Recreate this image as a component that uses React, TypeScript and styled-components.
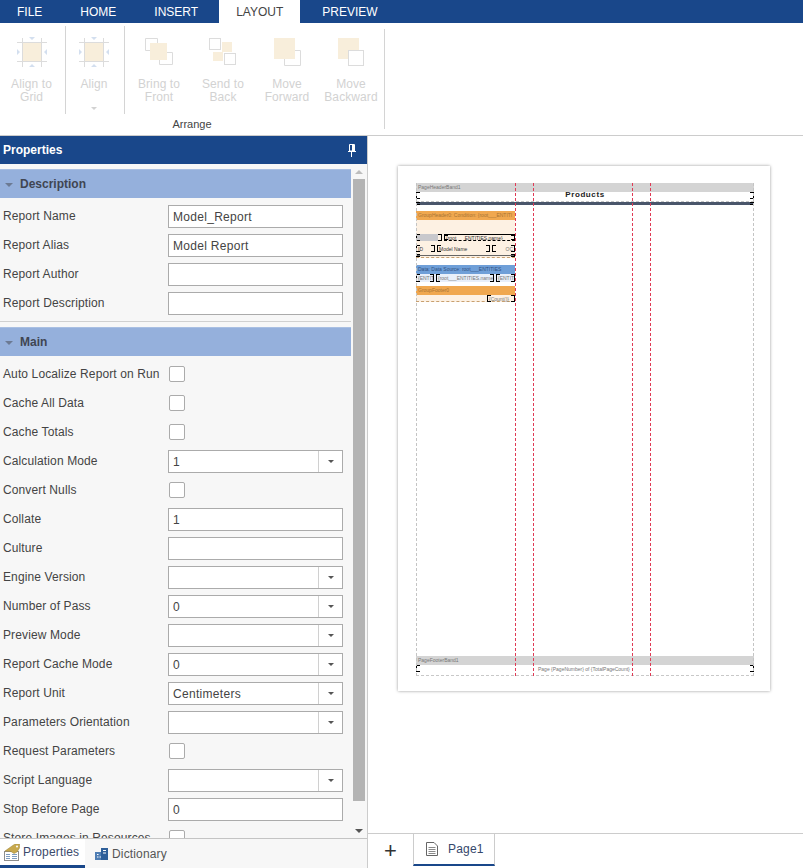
import React from "react";
import styled, { createGlobalStyle } from "styled-components";

const NAVY = "#19478a";

const TABS = ["FILE", "HOME", "INSERT", "LAYOUT", "PREVIEW"];

type Field = { label: string; kind: "text" | "select" | "check"; value?: string };

const DESCRIPTION: Field[] = [
  { label: "Report Name", kind: "text", value: "Model_Report" },
  { label: "Report Alias", kind: "text", value: "Model Report" },
  { label: "Report Author", kind: "text" },
  { label: "Report Description", kind: "text" },
];

const MAIN: Field[] = [
  { label: "Auto Localize Report on Run", kind: "check" },
  { label: "Cache All Data", kind: "check" },
  { label: "Cache Totals", kind: "check" },
  { label: "Calculation Mode", kind: "select", value: "1" },
  { label: "Convert Nulls", kind: "check" },
  { label: "Collate", kind: "text", value: "1" },
  { label: "Culture", kind: "text" },
  { label: "Engine Version", kind: "select" },
  { label: "Number of Pass", kind: "select", value: "0" },
  { label: "Preview Mode", kind: "select" },
  { label: "Report Cache Mode", kind: "select", value: "0" },
  { label: "Report Unit", kind: "select", value: "Centimeters" },
  { label: "Parameters Orientation", kind: "select" },
  { label: "Request Parameters", kind: "check" },
  { label: "Script Language", kind: "select" },
  { label: "Stop Before Page", kind: "text", value: "0" },
  { label: "Store Images in Resources", kind: "check" },
];

const PEACH = "#f8eedb";
const EDGE = "#dcdcdc";
const HINT = "#d3dfef";

function AlignIcon() {
  return (
    <svg width="32" height="32" viewBox="0 0 32 32">
      <rect x="6" y="7" width="20" height="19" fill={PEACH} />
      <path d="M1 6.5H31M1 25.5H31M6.5 2V31M25.5 2V31" stroke={EDGE} fill="none" />
      <path d="M13 1H19L16 4ZM13 31H19L16 28ZM1 13V19L4 16ZM31 13V19L28 16Z" fill={HINT} />
    </svg>
  );
}

function FrontIcon() {
  return (
    <svg width="32" height="32" viewBox="0 0 32 32" fill="none">
      <path d="M7 14.5H2.5V2.5H14.5V7" stroke={EDGE} />
      <rect x="7" y="7" width="17" height="17" fill={PEACH} />
      <path d="M24 16.5H29.5V28.5H16.5V24" stroke={EDGE} />
    </svg>
  );
}

function BackIcon() {
  return (
    <svg width="32" height="32" viewBox="0 0 32 32" fill="none">
      <rect x="15" y="6" width="10" height="10" fill={PEACH} />
      <rect x="6" y="16" width="10" height="9" fill={PEACH} />
      <rect x="2.5" y="2.5" width="11" height="11" fill="#fff" stroke={EDGE} />
      <rect x="17.5" y="17.5" width="11" height="11" fill="#fff" stroke={EDGE} />
    </svg>
  );
}

function ForwardIcon() {
  return (
    <svg width="32" height="32" viewBox="0 0 32 32" fill="none">
      <rect x="3" y="2" width="21" height="21" fill={PEACH} />
      <path d="M24 14.5H29.5V29.5H13.5V23" stroke={EDGE} />
    </svg>
  );
}

function BackwardIcon() {
  return (
    <svg width="32" height="32" viewBox="0 0 32 32" fill="none">
      <rect x="3" y="2" width="21" height="21" fill={PEACH} />
      <rect x="13.5" y="14.5" width="15" height="15" fill="#fff" stroke={EDGE} />
    </svg>
  );
}

function PinIcon() {
  return (
    <svg width="8" height="13" viewBox="0 0 8 13">
      <path d="M1.5 0.5H6.5V7H1.5Z" fill="none" stroke="#fff" />
      <rect x="4" y="1" width="2" height="6" fill="#fff" />
      <rect x="0" y="7" width="8" height="1" fill="#fff" />
      <rect x="3" y="8" width="1" height="5" fill="#fff" />
    </svg>
  );
}

function PropertiesIcon() {
  return (
    <svg width="16" height="17" viewBox="0 0 16 17">
      <rect x="0.5" y="7.5" width="14" height="9" fill="#fff" stroke="#8d8d8d" />
      <path d="M2 10.5H6M8 10.5H13M2 12.5H6M8 12.5H13M2 14.5H6M8 14.5H13" stroke="#7d9cc0" />
      <path d="M1 7L8 2L11 0H15.5V4L13 8L10 9.5L7 7.5Z" fill="#c8a94e" stroke="#9b8236" strokeWidth="0.5" />
      <circle cx="13" cy="2.5" r="1" fill="#fff" />
    </svg>
  );
}

function DictionaryIcon() {
  return (
    <svg width="13" height="13" viewBox="0 0 13 13">
      <rect x="0" y="5" width="7" height="8" fill="#4f7db3" />
      <rect x="6" y="1" width="7" height="12" fill="#2f5f99" />
      <path d="M2 7.5H3.5M2 10H3.5M4.5 10H6M8 3.5H11M8 6H11" stroke="#fff" />
    </svg>
  );
}

function PageIcon() {
  return (
    <svg width="12" height="14" viewBox="0 0 12 14" fill="none" stroke="#666">
      <path d="M0.5 0.5H8L11.5 4V13.5H0.5Z" />
      <path d="M2.5 5.5H9.5M2.5 7.5H9.5M2.5 9.5H9.5M2.5 11.5H9.5" stroke="#8a8a8a" />
    </svg>
  );
}

function FieldRow({ field }: { field: Field }) {
  return (
    <Row>
      <RowLabel>{field.label}</RowLabel>
      {field.kind === "check" && <CheckBox />}
      {field.kind === "text" && <TextBox>{field.value}</TextBox>}
      {field.kind === "select" && (
        <SelectBox>
          <SelectValue>{field.value}</SelectValue>
          <SelectArrow />
        </SelectBox>
      )}
    </Row>
  );
}

export default function App() {
  return (
    <Screen>
      <GlobalStyle />
      <TabBar>
        {TABS.map((tab) => (
          <Tab key={tab} $active={tab === "LAYOUT"}>
            {tab}
          </Tab>
        ))}
      </TabBar>

      <Ribbon>
        <RibbonGroup>
          <GroupTools>
            <ToolSlot $width={66}>
              <ToolButton>
                <AlignIcon />
                <ToolLabel>Align to Grid</ToolLabel>
              </ToolButton>
            </ToolSlot>
            <ToolSlot $width={59}>
              <ToolButton>
                <AlignIcon />
                <ToolLabel>Align</ToolLabel>
                <ToolCaret />
              </ToolButton>
            </ToolSlot>
            <ArrangeTools>
              <ToolButton>
                <FrontIcon />
                <ToolLabel>Bring to Front</ToolLabel>
              </ToolButton>
              <ToolButton>
                <BackIcon />
                <ToolLabel>Send to Back</ToolLabel>
              </ToolButton>
              <ToolButton>
                <ForwardIcon />
                <ToolLabel>Move Forward</ToolLabel>
              </ToolButton>
              <ToolButton>
                <BackwardIcon />
                <ToolLabel>Move Backward</ToolLabel>
              </ToolButton>
            </ArrangeTools>
          </GroupTools>
          <GroupName>Arrange</GroupName>
        </RibbonGroup>
      </Ribbon>

      <Workspace>
        <SidePanel>
          <PanelHeader>
            <span>Properties</span>
            <PinIcon />
          </PanelHeader>
          <PanelBody>
            <PropertyList>
              <Category>Description</Category>
              <RowGroup $divided>
                {DESCRIPTION.map((f) => (
                  <FieldRow key={f.label} field={f} />
                ))}
              </RowGroup>
              <Category>Main</Category>
              <RowGroup>
                {MAIN.map((f) => (
                  <FieldRow key={f.label} field={f} />
                ))}
              </RowGroup>
            </PropertyList>
            <ScrollTrack>
              <ScrollArrow $up />
              <ScrollThumb />
              <ScrollArrow />
            </ScrollTrack>
          </PanelBody>
          <PanelTabs>
            <PanelTab $active>
              <PropertiesIcon />
              Properties
            </PanelTab>
            <PanelTab>
              <DictionaryIcon />
              Dictionary
            </PanelTab>
          </PanelTabs>
        </SidePanel>

        <Designer>
          <DesignArea>
            <Sheet>
              <Canvas>
                <BandTitle $tone="#d4d4d4" $rounded>
                  PageHeaderBand1
                </BandTitle>
                <BandBody $height={10}>
                  <Cell $grow $height={7}>
                    <TitleText>Products</TitleText>
                  </Cell>
                </BandBody>
                <RuleBar $height={3} />

                <Column>
                  <BandTitle $tone="#f0a850" $ink="#a87434">
                    GroupHeader0: Condition: {"{root___ENTITI"}
                  </BandTitle>
                  <GroupBody>
                    <CellRow>
                      <Cell $width={26} $height={7}>
                        <GreyFill />
                      </Cell>
                      <Cell $grow $height={7} $ruled>
                        <CellText $strong>{"{root___ENTITIES.name}"}</CellText>
                      </Cell>
                    </CellRow>
                    <CellRow>
                      <Cell $width={19} $height={7}>
                        <CellText $strong>ID</CellText>
                      </Cell>
                      <Cell $width={53} $height={7}>
                        <CellText $strong>Model Name</CellText>
                      </Cell>
                      <Cell $grow $height={7}>
                        <CellText $end>OC</CellText>
                      </Cell>
                    </CellRow>
                    <GroupRule $height={3} />
                  </GroupBody>
                  <BandTitle $tone="#6f9fd8" $ink="#2f4f7f" $space={7}>
                    Data: Data Source: root___ENTITIES
                  </BandTitle>
                  <DataBody>
                    <Cell $width={18} $height={8}>
                      <CellText>{"{ENTITI"}</CellText>
                    </Cell>
                    <Cell $width={58} $height={8}>
                      <CellText>{"{root___ENTITIES.name}"}</CellText>
                    </Cell>
                    <Cell $grow $height={8}>
                      <CellText>{"{ENTITI"}</CellText>
                    </Cell>
                  </DataBody>
                  <BandTitle $tone="#f0a850" $ink="#a87434" $space={4}>
                    GroupFooter0
                  </BandTitle>
                  <FooterBody>
                    <Cell $width={28} $height={7}>
                      <CellText>{"{Count()}"}</CellText>
                    </Cell>
                  </FooterBody>
                </Column>

                <CanvasSpacer />

                <BandTitle $tone="#d4d4d4">PageFooterBand1</BandTitle>
                <BandBody $height={11}>
                  <Cell $grow $height={7}>
                    <PageNumberText>{"Page {PageNumber} of {TotalPageCount}"}</PageNumberText>
                  </Cell>
                </BandBody>

                {[0, 337].map((left) => (
                  <ColumnGuide key={left} $left={left} $tone="#c4c4c4" />
                ))}
                {[99, 117, 216, 234].map((left) => (
                  <ColumnGuide key={left} $left={left} $tone="#e03a55" />
                ))}
              </Canvas>
            </Sheet>
          </DesignArea>
          <PageBar>
            <AddPage>+</AddPage>
            <PageTab>
              <PageIcon />
              <span>Page1</span>
            </PageTab>
          </PageBar>
        </Designer>
      </Workspace>
    </Screen>
  );
}

const GlobalStyle = createGlobalStyle`
  html, body {
    margin: 0;
    padding: 0;
    background: #fff;
  }
  * {
    box-sizing: border-box;
  }
`;

const Screen = styled.div`
  display: flex;
  flex-direction: column;
  width: 803px;
  height: 868px;
  overflow: hidden;
  font-family: "Liberation Sans", Arial, sans-serif;
  font-size: 12px;
  color: #444;
`;

const TabBar = styled.div`
  display: flex;
  gap: 2px;
  height: 23px;
  flex-shrink: 0;
  background: ${NAVY};
`;

const Tab = styled.div<{ $active?: boolean }>`
  display: flex;
  align-items: center;
  padding: 0 ${(p) => (p.$active ? "17px" : "18px")};
  margin: 0 ${(p) => (p.$active ? "2px 0 1px" : "0")};
  font-size: 12px;
  color: ${(p) => (p.$active ? "#444" : "#fff")};
  background: ${(p) => (p.$active ? "#fff" : "transparent")};
  &:first-child {
    padding-left: 17px;
  }
`;

const Ribbon = styled.div`
  display: flex;
  height: 113px;
  flex-shrink: 0;
  border-bottom: 1px solid #ccc;
`;

const RibbonGroup = styled.div`
  display: flex;
  flex-direction: column;
  align-items: center;
  width: 385px;
  height: 100px;
  margin-top: 6px;
  border-right: 1px solid #d4d4d4;
`;

const GroupTools = styled.div`
  display: flex;
  width: 100%;
  height: 85px;
  margin-top: -3px;
  margin-bottom: 3px;
`;

const ToolSlot = styled.div<{ $width: number }>`
  display: flex;
  justify-content: center;
  width: ${(p) => p.$width}px;
  height: 88px;
  padding-right: 2px;
  border-right: 1px solid #d4d4d4;
`;

const ArrangeTools = styled.div`
  display: flex;
  height: 85px;
  padding-left: 2px;
`;

const ToolButton = styled.div`
  display: flex;
  flex-direction: column;
  align-items: center;
  width: 64px;
  padding-top: 10px;
`;

const ToolLabel = styled.div`
  margin-top: 10px;
  width: 60px;
  text-align: center;
  line-height: 13px;
  font-size: 12px;
  letter-spacing: 0.1px;
  color: #d2d2d2;
`;

const ToolCaret = styled.div`
  width: 0;
  height: 0;
  margin-top: 16px;
  border-left: 3px solid transparent;
  border-right: 3px solid transparent;
  border-top: 3px solid #d2d2d2;
`;

const GroupName = styled.div`
  margin-top: 4px;
  font-size: 11px;
  color: #444;
`;

const Workspace = styled.div`
  display: flex;
  flex: 1;
  min-height: 0;
`;

const SidePanel = styled.div`
  display: flex;
  flex-direction: column;
  width: 368px;
  flex-shrink: 0;
  border-right: 1px solid #ccc;
  background: #f7f7f7;
`;

const PanelHeader = styled.div`
  display: flex;
  align-items: center;
  justify-content: space-between;
  height: 28px;
  flex-shrink: 0;
  padding: 0 11px 0 3px;
  font-weight: bold;
  color: #fff;
  background: ${NAVY};
`;

const PanelBody = styled.div`
  display: flex;
  flex: 1;
  min-height: 0;
  overflow: hidden;
`;

const PropertyList = styled.div`
  width: 351px;
  padding-top: 5px;
  margin-right: 1px;
  overflow: hidden;
`;

const Category = styled.div`
  position: relative;
  display: flex;
  align-items: center;
  height: 29px;
  padding-left: 20px;
  font-weight: bold;
  color: #404552;
  background: #95b0dc;
  border-top: 1px solid #a9bfe2;
  &::before {
    content: "";
    position: absolute;
    left: 5px;
    top: 13px;
    border-left: 4px solid transparent;
    border-right: 4px solid transparent;
    border-top: 4px solid #6c7a93;
  }
`;

const RowGroup = styled.div<{ $divided?: boolean }>`
  padding: 4px 0 3px;
  margin-bottom: 5px;
  ${(p) => p.$divided && "border-bottom: 1px solid #d0d0d0;"}
`;

const Row = styled.div`
  display: flex;
  align-items: center;
  height: 29px;
  padding-left: 3px;
`;

const RowLabel = styled.div`
  width: 165px;
  flex-shrink: 0;
  margin-top: -1px;
  white-space: nowrap;
  letter-spacing: 0.12px;
`;

const TextBox = styled.div`
  display: flex;
  align-items: center;
  width: 175px;
  height: 23px;
  padding-left: 4px;
  letter-spacing: 0.3px;
  background: #fff;
  border: 1px solid #ababab;
`;

const SelectBox = styled(TextBox)`
  padding-left: 0;
`;

const SelectValue = styled.div`
  flex: 1;
  padding-left: 4px;
`;

const SelectArrow = styled.div`
  position: relative;
  width: 24px;
  height: 100%;
  border-left: 1px solid #d0d0d0;
  &::after {
    content: "";
    position: absolute;
    left: 9px;
    top: 9px;
    border-left: 3px solid transparent;
    border-right: 3px solid transparent;
    border-top: 3px solid #555;
  }
`;

const CheckBox = styled.div`
  width: 16px;
  height: 16px;
  margin: -1px 0 0 1px;
  background: #fff;
  border: 1px solid #ababab;
  border-radius: 2px;
`;

const ScrollTrack = styled.div`
  display: flex;
  flex-direction: column;
  align-items: center;
  width: 14px;
  flex-shrink: 0;
`;

const ScrollArrow = styled.div<{ $up?: boolean }>`
  width: 0;
  height: 0;
  margin: ${(p) => (p.$up ? "6px 0 5px" : "auto 0 5px")};
  border-left: 4px solid transparent;
  border-right: 4px solid transparent;
  ${(p) => (p.$up ? "border-bottom: 4px solid #bdbdbd;" : "border-top: 4px solid #555;")}
`;

const ScrollThumb = styled.div`
  width: 12px;
  height: 622px;
  background: #b4b4b4;
`;

const PanelTabs = styled.div`
  display: flex;
  height: 30px;
  flex-shrink: 0;
  border-top: 1px solid #c4c4c4;
  background: #f7f7f7;
`;

const PanelTab = styled.div<{ $active?: boolean }>`
  display: flex;
  align-items: center;
  gap: ${(p) => (p.$active ? "3px" : "4px")};
  width: ${(p) => (p.$active ? "85px" : "auto")};
  height: 100%;
  padding-left: ${(p) => (p.$active ? "4px" : "10px")};
  letter-spacing: 0.15px;
  color: ${(p) => (p.$active ? "#3b4a6b" : "#555")};
  background: ${(p) => (p.$active ? "#fff" : "transparent")};
  border-bottom: ${(p) => (p.$active ? `3px solid ${NAVY}` : "none")};
`;

const Designer = styled.div`
  display: flex;
  flex-direction: column;
  flex: 1;
  min-width: 0;
`;

const DesignArea = styled.div`
  flex: 1;
  min-height: 0;
  padding: 30px 0 0 30px;
`;

const Sheet = styled.div`
  display: flex;
  width: 372px;
  height: 525px;
  padding: 17px 16px 15px 18px;
  background: #fff;
  box-shadow: 0 0 3px rgba(0, 0, 0, 0.4);
`;

const Canvas = styled.div`
  position: relative;
  display: flex;
  flex-direction: column;
  flex: 1;
`;

const BandTitle = styled.div<{ $tone: string; $ink?: string; $rounded?: boolean; $space?: number }>`
  height: 9px;
  flex-shrink: 0;
  margin-top: ${(p) => p.$space ?? 0}px;
  padding-left: 2px;
  line-height: 9px;
  font-size: 5px;
  white-space: nowrap;
  overflow: hidden;
  color: ${(p) => p.$ink ?? "#777"};
  background: ${(p) => p.$tone};
  border-radius: ${(p) => (p.$rounded ? "2px 2px 0 0" : "0")};
`;

const BandBody = styled.div<{ $height: number }>`
  display: flex;
  height: ${(p) => p.$height}px;
  flex-shrink: 0;
  border-bottom: 1px dashed #c8c8c8;
`;

const Column = styled.div`
  display: flex;
  flex-direction: column;
  width: 99px;
  margin-top: 6px;
`;

const GroupBody = styled.div`
  display: flex;
  flex-direction: column;
  height: 38px;
  padding-top: 14px;
  gap: 4px;
  background: #fdf1e3;
  border-bottom: 1px dashed #c8a070;
`;

const CellRow = styled.div`
  display: flex;
  gap: 2px;
`;

const DataBody = styled.div`
  display: flex;
  gap: 2px;
  height: 8px;
  background: #e8effa;
`;

const FooterBody = styled.div`
  display: flex;
  justify-content: flex-end;
  height: 7px;
  background: #fdf1e3;
  border-bottom: 1px dashed #c8a070;
`;

const Cell = styled.div<{ $width?: number; $height: number; $grow?: boolean; $ruled?: boolean }>`
  position: relative;
  display: flex;
  align-items: center;
  min-width: 0;
  overflow: hidden;
  height: ${(p) => p.$height}px;
  ${(p) => (p.$grow ? "flex: 1;" : p.$width ? `width: ${p.$width}px;` : "")}
  ${(p) => p.$ruled && "border-top: 1px solid #000; border-bottom: 1px dashed #000;"}
  &::before,
  &::after {
    content: "";
    position: absolute;
    top: 0;
    bottom: 0;
    width: 3px;
    border-top: 1px solid #000;
    border-bottom: 1px solid #000;
  }
  &::before {
    left: 0;
    border-left: 1px solid #000;
  }
  &::after {
    right: 0;
    border-right: 1px solid #000;
  }
`;

const RuleBar = styled(Cell)`
  flex-shrink: 0;
  background: #4a566b;
`;

const GroupRule = styled(RuleBar)`
  margin-top: -2px;
  background: linear-gradient(#666, #666) center / 100% 1px no-repeat;
`;

const GreyFill = styled.div`
  width: 21px;
  height: 100%;
  margin-left: 1px;
  background: #c8c8cc;
`;

const CellText = styled.div<{ $strong?: boolean; $end?: boolean }>`
  width: 100%;
  padding: 0 2px;
  font-size: 5px;
  white-space: nowrap;
  overflow: hidden;
  text-align: ${(p) => (p.$end ? "right" : "left")};
  color: ${(p) => (p.$strong ? "#333" : "#777")};
`;

const TitleText = styled.div`
  width: 100%;
  margin-top: -2px;
  text-align: center;
  font-size: 8px;
  line-height: 7px;
  font-weight: bold;
  letter-spacing: 0.6px;
  color: #222;
`;

const PageNumberText = styled.div`
  padding-left: 122px;
  font-size: 5px;
  white-space: nowrap;
  color: #777;
`;

const CanvasSpacer = styled.div`
  flex: 1;
`;

const ColumnGuide = styled.div<{ $left: number; $tone: string }>`
  position: absolute;
  top: 0;
  bottom: 0;
  left: ${(p) => p.$left}px;
  border-left: 1px dashed ${(p) => p.$tone};
`;

const PageBar = styled.div`
  display: flex;
  align-items: flex-start;
  height: 35px;
  flex-shrink: 0;
  background: #fff;
  border-top: 1px solid #ccc;
`;

const AddPage = styled.div`
  display: flex;
  align-items: center;
  justify-content: center;
  width: 45px;
  height: 34px;
  font-size: 22px;
  color: #333;
`;

const PageTab = styled.div`
  display: flex;
  align-items: center;
  gap: 10px;
  width: 82px;
  height: 32px;
  padding-left: 12px;
  letter-spacing: 0.2px;
  color: #35476b;
  border-left: 1px solid #ccc;
  border-right: 1px solid #ccc;
  border-bottom: 2px solid ${NAVY};
`;
